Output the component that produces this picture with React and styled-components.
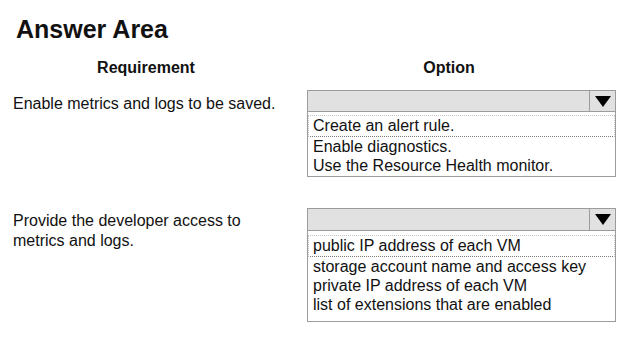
import React from 'react';
import styled, { createGlobalStyle } from 'styled-components';

const GlobalStyle = createGlobalStyle`
	html, body {
		margin: 0;
		padding: 0;
		background: #ffffff;
	}
	body {
		font-family: "Liberation Sans", Arial, sans-serif;
		color: #111111;
	}
`;

const Page = styled.div`
	width: 644px;
	height: 344px;
	box-sizing: border-box;
	padding: 15px 0 0 13px;
	overflow: hidden;
`;

const Title = styled.h1`
	margin: 0;
	padding-left: 3px;
	font-size: 25px;
	line-height: 28px;
	font-weight: bold;
`;

const Grid = styled.div`
	display: grid;
	grid-template-columns: 266px 309px;
	column-gap: 28px;
	margin-top: ${(p) => p.$top}px;
	align-items: start;
`;

const ColumnHead = styled.div`
	font-size: 16px;
	line-height: 20px;
	font-weight: bold;
	text-align: center;
	padding-right: ${(p) => p.$shift || 0}px;
`;

const Requirement = styled.div`
	font-size: 16px;
	line-height: 19.5px;
	margin-top: ${(p) => p.$top || 0}px;
`;

const Dropdown = styled.div`
	display: flex;
	flex-direction: column;
	margin-top: ${(p) => p.$top || 0}px;
`;

const Select = styled.div`
	display: flex;
	height: ${(p) => p.$height}px;
	box-sizing: border-box;
	border: 1px solid #9c9c9c;
	background: #e1e1e1;
`;

const SelectValue = styled.div`
	flex: 1;
`;

const Arrow = styled.div`
	width: 25px;
	display: flex;
	align-items: center;
	justify-content: center;
	border-left: 1px solid #9c9c9c;

	&::after {
		content: '';
		width: 0;
		height: 0;
		border-left: 8.5px solid transparent;
		border-right: 8.5px solid transparent;
		border-top: 11px solid #000000;
	}
`;

const Options = styled.ul`
	list-style: none;
	margin: 0;
	padding: ${(p) => p.$top}px 0 ${(p) => p.$bottom}px;
	border: 1px solid #9c9c9c;
	border-top: none;
`;

const Option = styled.li`
	font-size: 16px;
	line-height: 19px;
	padding-left: 5px;
	white-space: nowrap;

	&:first-child {
		line-height: 20px;
		padding-left: 4px;
		border: 1px dotted #c4c4c4;
		border-bottom-color: #7a7a7a;
	}
`;

function AnswerDropdown({ top, headerHeight, padTop, padBottom, options }) {
	return (
		<Dropdown $top={top}>
			<Select $height={headerHeight}>
				<SelectValue />
				<Arrow />
			</Select>
			<Options $top={padTop} $bottom={padBottom}>
				{options.map((o) => (
					<Option key={o}>{o}</Option>
				))}
			</Options>
		</Dropdown>
	);
}

export default function App() {
	return (
		<>
			<GlobalStyle />
			<Page>
				<Title>Answer Area</Title>

				<Grid $top={15}>
					<ColumnHead>Requirement</ColumnHead>
					<ColumnHead $shift={25}>Option</ColumnHead>
				</Grid>

				<Grid $top={7}>
					<Requirement $top={9}>Enable metrics and logs to be saved.</Requirement>
					<AnswerDropdown
						top={5}
						headerHeight={22}
						padTop={3}
						padBottom={1}
						options={[
							'Create an alert rule.',
							'Enable diagnostics.',
							'Use the Resource Health monitor.',
						]}
					/>
				</Grid>

				<Grid $top={31}>
					<Requirement $top={3}>
						Provide the developer access to
						<br />
						metrics and logs.
					</Requirement>
					<AnswerDropdown
						top={0}
						headerHeight={23}
						padTop={4}
						padBottom={7}
						options={[
							'public IP address of each VM',
							'storage account name and access key',
							'private IP address of each VM',
							'list of extensions that are enabled',
						]}
					/>
				</Grid>
			</Page>
		</>
	);
}
